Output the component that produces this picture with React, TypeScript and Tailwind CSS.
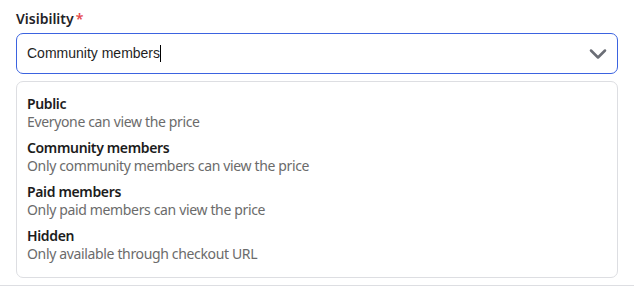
import { ChevronDown } from 'lucide-react';

const options = [
  { label: 'Public', description: 'Everyone can view the price' },
  { label: 'Community members', description: 'Only community members can view the price' },
  { label: 'Paid members', description: 'Only paid members can view the price' },
  { label: 'Hidden', description: 'Only available through checkout URL' },
];

export default function App() {
  return (
    <div className="w-[634px] h-[293px] bg-white overflow-hidden font-['Noto_Sans',sans-serif]">
      <div className="px-4 pt-[8px]">
        <label className="flex items-center h-[20px] text-[14px] font-semibold text-[#1f2328]">
          Visibility
          <span className="text-[#e5484d] ml-[2px]">*</span>
        </label>
        <div className="mt-[5px] h-[41px] flex items-center justify-between rounded-[7px] border border-[#3b63e0] pl-[10px] pr-[5px]">
          <span className="text-[14px] text-[#1f1f1f] font-['Liberation_Sans',sans-serif]">
            Community members
            <span className="inline-block w-px h-[17px] bg-black align-middle -mt-[2px]" />
          </span>
          <ChevronDown className="w-[28px] h-[28px] text-[#6b6e76]" strokeWidth={2.2} />
        </div>
        <div className="mt-[7px] h-[197px] rounded-[7px] border border-[#dddee2] px-[10px] pt-[13px] flex flex-col gap-[8px]">
          {options.map((o) => (
            <div key={o.label} className="leading-[18px] tracking-[-0.35px]">
              <div className="text-[14px] font-semibold text-[#1c1c1c]">{o.label}</div>
              <div className="text-[14px] text-[#6b6b6b]">{o.description}</div>
            </div>
          ))}
        </div>
      </div>
      <div className="mt-[7px] h-px bg-[#dddee2]" />
    </div>
  );
}
